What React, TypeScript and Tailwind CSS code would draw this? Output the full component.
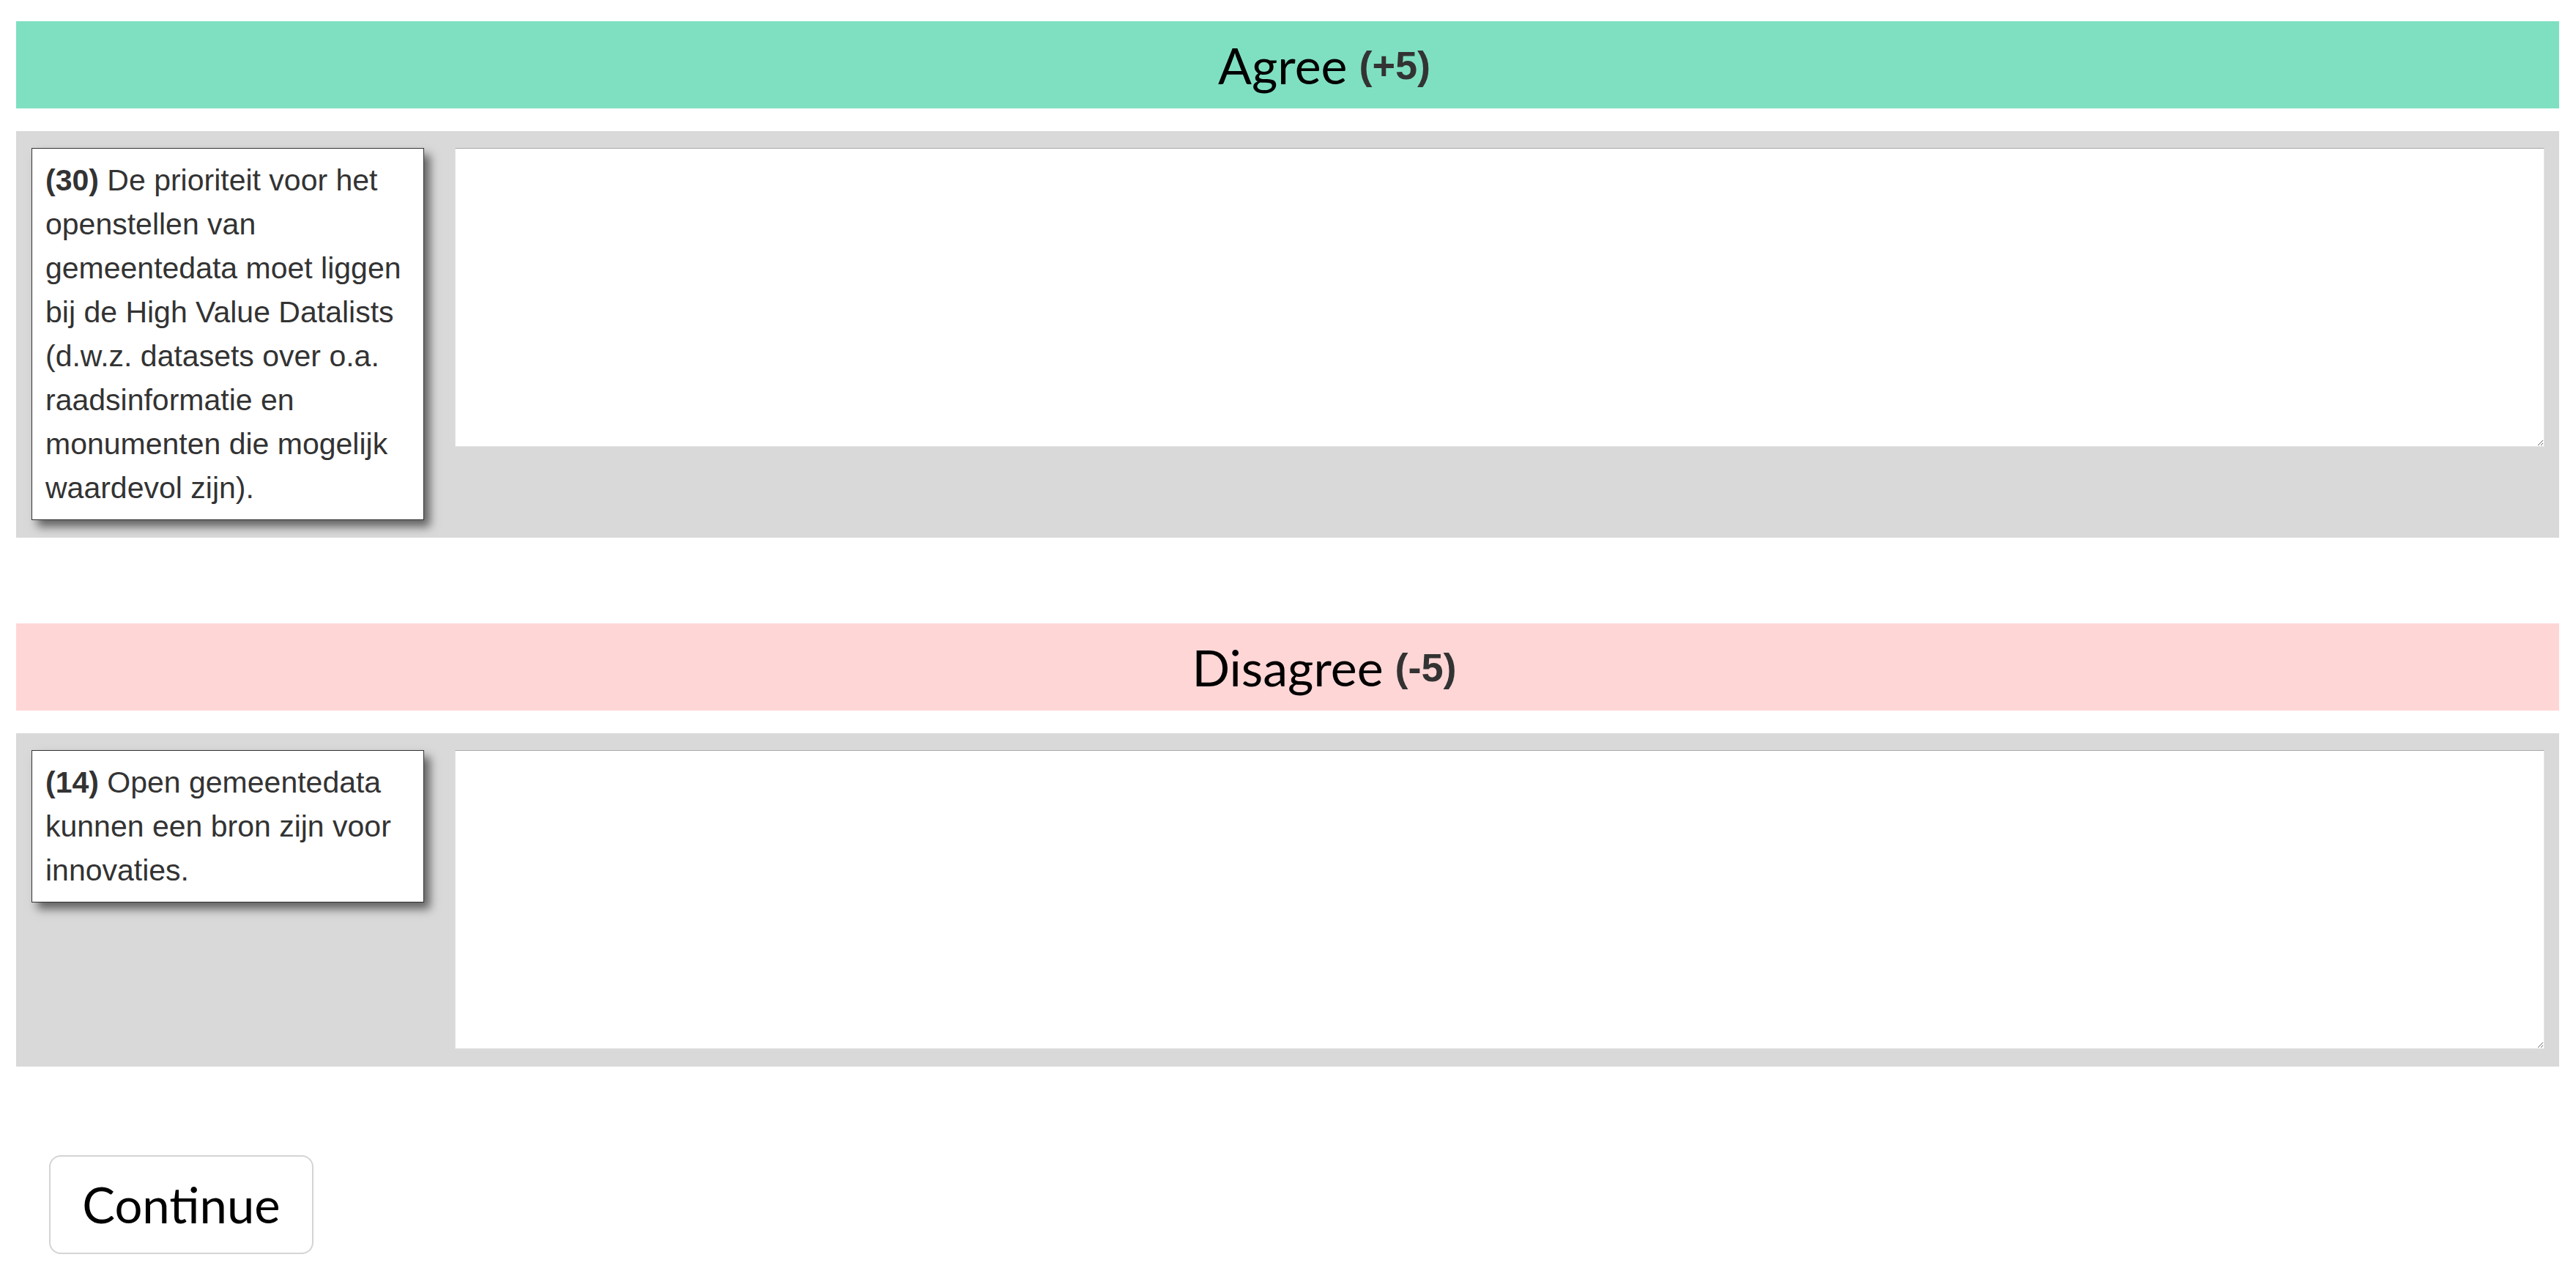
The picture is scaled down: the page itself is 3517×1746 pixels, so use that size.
import type { ReactNode } from 'react';

type Statement = {
  id: number;
  text: string;
};

const SECTIONS: { label: string; score: string; band: string; statement: Statement }[] = [
  {
    label: 'Agree',
    score: '(+5)',
    band: 'bg-[#7fe0c1]',
    statement: {
      id: 30,
      text: 'De prioriteit voor het openstellen van gemeentedata moet liggen bij de High Value Datalists (d.w.z. datasets over o.a. raadsinformatie en monumenten die mogelijk waardevol zijn).',
    },
  },
  {
    label: 'Disagree',
    score: '(-5)',
    band: 'bg-[#ffd6d6]',
    statement: {
      id: 14,
      text: 'Open gemeentedata kunnen een bron zijn voor innovaties.',
    },
  },
];

const Band = ({ className, children }: { className: string; children: ReactNode }) => (
  <div className={`flex h-[119px] items-center justify-center pl-[100px] ${className}`}>
    {children}
  </div>
);

const StatementRow = ({ statement }: { statement: Statement }) => (
  <div className="mt-[31px] flex items-start gap-[42px] bg-[#d9d9d9] pb-[24px] pl-[21px] pr-[20px] pt-[23px]">
    <div className="w-[536px] shrink-0 border border-[#333] bg-white px-[18px] py-[13px] font-[family-name:Liberation_Sans,Arial,sans-serif] text-[41px] leading-[60px] text-[#333] shadow-[8px_9px_12px_rgba(0,0,0,0.55)]">
      <b>({statement.id})</b> {statement.text}
    </div>
    <textarea
      className="h-[408px] flex-1 border border-[#e3e3e3] border-t-[#a8a8a8] bg-white p-2 outline-none"
      aria-label={`Toelichting bij stelling ${statement.id}`}
    />
  </div>
);

export default function App() {
  return (
    <div className="min-h-screen bg-white pl-[22px] pr-[23px] pt-[29px]">
      {SECTIONS.map((section, i) => (
        <section key={section.label} className={i > 0 ? 'mt-[117px]' : ''}>
          <Band className={section.band}>
            <span className="font-[family-name:Lato,sans-serif] text-[68px] leading-none text-black">
              {section.label}
            </span>
            <span className="ml-[16px] font-[family-name:Liberation_Sans,Arial,sans-serif] text-[54px] font-bold leading-none text-[#333]">
              {section.score}
            </span>
          </Band>
          <StatementRow statement={section.statement} />
        </section>
      ))}

      <button
        type="button"
        className="ml-[45px] mt-[121px] flex h-[135px] w-[361px] items-center justify-center rounded-[16px] border-2 border-[#d4d4d4] bg-white font-[family-name:Lato,sans-serif] text-[67px] text-black"
      >
        Continue
      </button>
    </div>
  );
}
